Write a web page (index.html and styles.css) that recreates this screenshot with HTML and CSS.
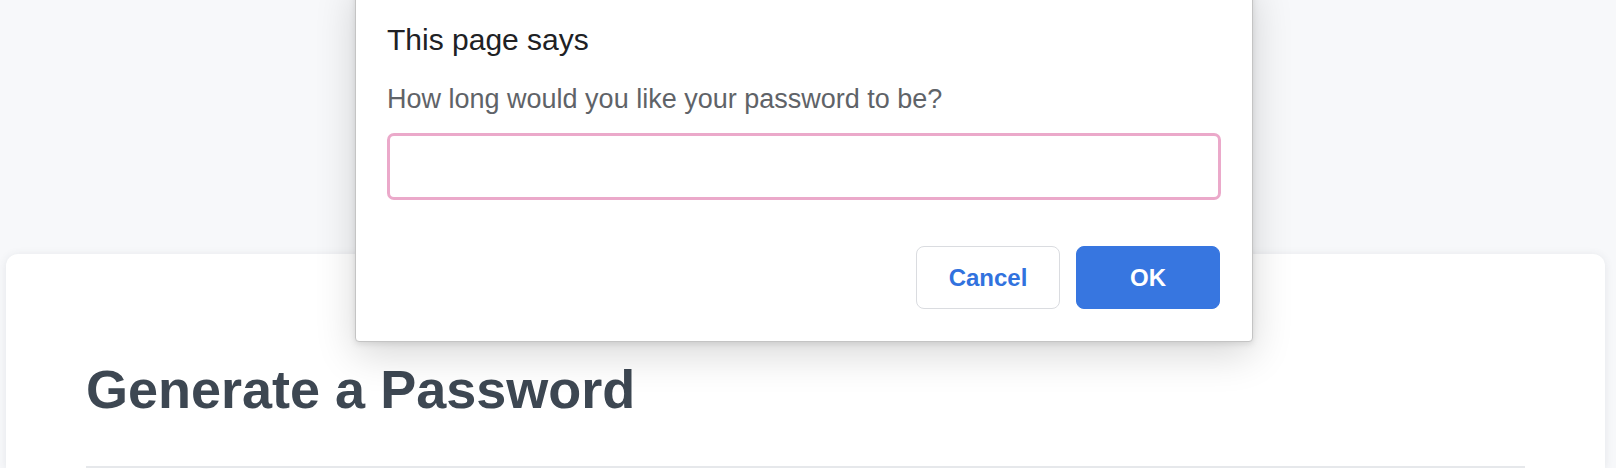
FILE: index.html
```html
<!DOCTYPE html>
<html lang="en">
<head>
<meta charset="utf-8">
<title>Password Generator</title>
<link rel="stylesheet" href="styles.css">
</head>
<body>
  <main class="page">
    <section class="card">
      <h1 class="card-title">Generate a Password</h1>
      <div class="card-divider"></div>
    </section>
  </main>

  <div class="dialog" role="dialog" aria-label="This page says">
    <div class="dialog-title">This page says</div>
    <div class="dialog-message">How long would you like your password to be?</div>
    <input class="dialog-input" type="text" aria-label="Password length">
    <div class="dialog-actions">
      <button class="btn btn-cancel">Cancel</button>
      <button class="btn btn-ok">OK</button>
    </div>
  </div>
</body>
</html>
```

FILE: styles.css
```css
* { box-sizing: border-box; }

html, body {
  margin: 0;
  padding: 0;
}

body {
  background: #f7f8fa;
  font-family: "Liberation Sans", Arial, sans-serif;
  height: 468px;
  overflow: hidden;
  position: relative;
}

.page {
  padding: 254px 11px 0 6px;
}

.card {
  background: #ffffff;
  border-radius: 12px 12px 0 0;
  box-shadow: 0 1px 8px rgba(60, 70, 90, 0.10);
  padding: 103px 80px 0 80px;
  height: 214px;
}

.card-title {
  margin: 0;
  font-size: 54px;
  line-height: 65px;
  font-weight: 700;
  color: #3d4752;
}

.card-divider {
  margin-top: 44px;
  height: 2px;
  background: #e6e8eb;
}

.dialog {
  position: absolute;
  left: 355px;
  top: -20px;
  width: 898px;
  background: #ffffff;
  border: 1px solid #c4c4c4;
  border-radius: 4px;
  box-shadow: 0 12px 40px rgba(0, 0, 0, 0.16), 0 2px 6px rgba(0, 0, 0, 0.10);
  padding: 41px 31px 32px 31px;
}

.dialog-title {
  font-size: 30px;
  line-height: 36px;
  color: #202124;
}

.dialog-message {
  margin-top: 25px;
  font-size: 27px;
  line-height: 32px;
  color: #5f6368;
}

.dialog-input {
  display: block;
  margin-top: 18px;
  width: 100%;
  height: 67px;
  border: 3px solid #eba9ca;
  border-radius: 7px;
  outline: none;
  background: #ffffff;
  font-family: inherit;
  font-size: 26px;
}

.dialog-actions {
  margin-top: 46px;
  display: flex;
  justify-content: flex-end;
  gap: 16px;
  padding-right: 1px;
}

.btn {
  width: 144px;
  height: 63px;
  border-radius: 8px;
  font-family: "Liberation Sans", Arial, sans-serif;
  font-size: 24px;
  font-weight: 700;
  cursor: pointer;
}

.btn-cancel {
  background: #ffffff;
  border: 1px solid #dadce0;
  color: #3172de;
}

.btn-ok {
  background: #3776e0;
  border: 1px solid #3776e0;
  color: #ffffff;
}
```
